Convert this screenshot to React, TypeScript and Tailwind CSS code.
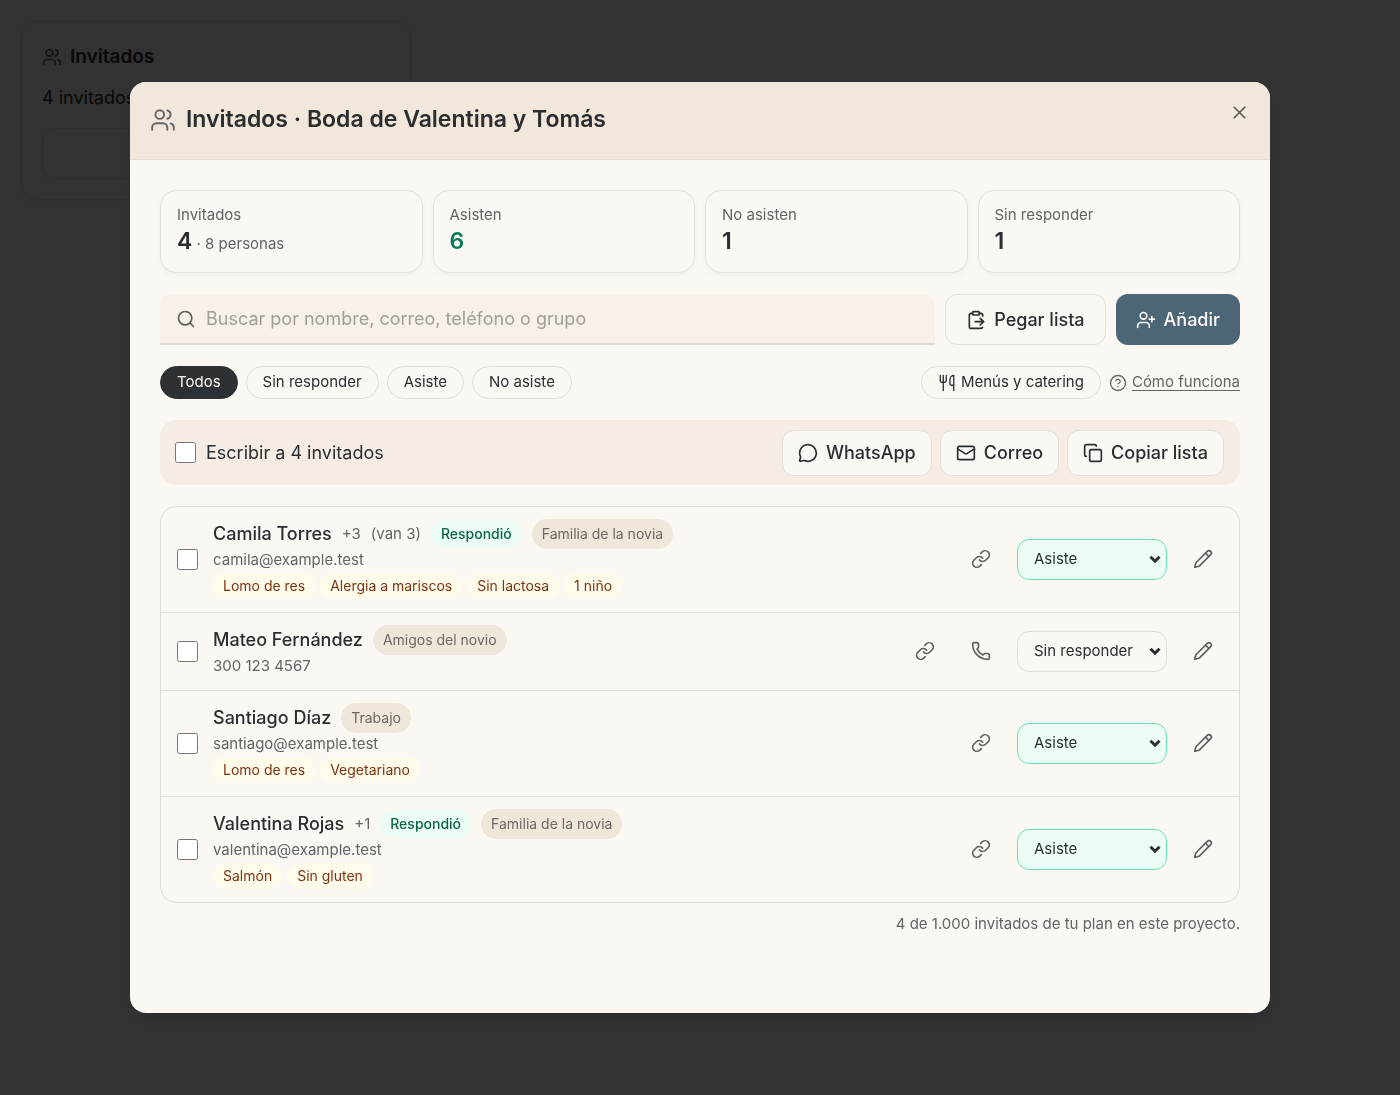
import { useState } from "react";
import {
  ChevronDown,
  CircleHelp,
  ClipboardPaste,
  Copy,
  Link,
  Mail,
  MessageCircle,
  Pencil,
  Phone,
  Search,
  UserPlus,
  Users,
  Utensils,
  X,
} from "lucide-react";

type Guest = {
  id: string;
  name: string;
  extra?: string;
  arriving?: string;
  responded?: boolean;
  group: string;
  contact: string;
  phone?: boolean;
  tags: string[];
  status: string;
};

const guests: Guest[] = [
  {
    id: "camila",
    name: "Camila Torres",
    extra: "+3",
    arriving: "(van 3)",
    responded: true,
    group: "Familia de la novia",
    contact: "camila@example.test",
    tags: ["Lomo de res", "Alergia a mariscos", "Sin lactosa", "1 niño"],
    status: "Asiste",
  },
  {
    id: "mateo",
    name: "Mateo Fernández",
    group: "Amigos del novio",
    contact: "300 123 4567",
    phone: true,
    tags: [],
    status: "Sin responder",
  },
  {
    id: "santiago",
    name: "Santiago Díaz",
    group: "Trabajo",
    contact: "santiago@example.test",
    tags: ["Lomo de res", "Vegetariano"],
    status: "Asiste",
  },
  {
    id: "valentina",
    name: "Valentina Rojas",
    extra: "+1",
    responded: true,
    group: "Familia de la novia",
    contact: "valentina@example.test",
    tags: ["Salmón", "Sin gluten"],
    status: "Asiste",
  },
];

const filters = ["Todos", "Sin responder", "Asiste", "No asiste"];

function Stat({ label, value, note, green }: { label: string; value: string; note?: string; green?: boolean }) {
  return (
    <div className="h-[83px] rounded-2xl border border-[#e3dfda] px-4 pt-3 shadow-[0_2px_6px_rgba(0,0,0,0.04)]">
      <p className="text-[15px] leading-[23px] text-[#646464]">{label}</p>
      <p className="leading-[30px]">
        <span className={green ? "text-[23px] font-semibold text-[#0a7a56]" : "text-[23px] font-semibold text-[#2b2d2e]"}>
          {value}
        </span>
        {note && <span className="text-[15px] text-[#646464]"> {note}</span>}
      </p>
    </div>
  );
}

function IconButton({ label, children }: { label: string; children: React.ReactNode }) {
  return (
    <button type="button" aria-label={label} className="flex size-[46px] items-center justify-center text-[#5f5f5f]">
      {children}
    </button>
  );
}

function GuestRow({ guest }: { guest: Guest }) {
  const [status, setStatus] = useState(guest.status);
  return (
    <li className="flex items-center border-b border-[#e0dcd7] pt-3 pr-[13px] pb-[13px] pl-4 last:border-b-0">
      <input type="checkbox" aria-label={`Seleccionar a ${guest.name}`} className="size-[21px] shrink-0" />
      <div className="ml-[15px] min-w-0 flex-1">
        <div className="flex h-[30px] items-center gap-[10px]">
          <span className="text-lg font-medium text-[#2b2d2e]">{guest.name}</span>
          {guest.extra && <span className="text-[15px] text-[#646464]">{guest.extra}</span>}
          {guest.arriving && <span className="text-[15px] text-[#646464]">{guest.arriving}</span>}
          {guest.responded && (
            <span className="rounded-full bg-[#ecfdf5] px-[10px] py-1 text-sm font-medium text-[#0b6647]">Respondió</span>
          )}
          <span className="rounded-full bg-[#f0e7db] px-[10px] py-[5px] text-sm text-[#6b6762]">{guest.group}</span>
        </div>
        <p className="text-[15px] leading-[22px] text-[#646464]">{guest.contact}</p>
        {guest.tags.length > 0 && (
          <div className="mt-[2px] flex gap-[5px]">
            {guest.tags.map((tag) => (
              <span key={tag} className="rounded-full bg-[#fffbeb] px-[10px] py-[3px] text-sm text-[#7c3413]">
                {tag}
              </span>
            ))}
          </div>
        )}
      </div>
      <div className="flex items-center gap-[13px]">
        <div className="flex gap-[10px]">
          <IconButton label="Copiar enlace">
            <Link size={20} />
          </IconButton>
          {guest.phone && (
            <IconButton label="Llamar">
              <Phone size={20} />
            </IconButton>
          )}
        </div>
        <div className="relative w-[150px]">
          <select
            aria-label={`Respuesta de ${guest.name}`}
            value={status}
            onChange={(e) => setStatus(e.target.value)}
            className={
              status === "Asiste"
                ? "h-[41px] w-full appearance-none rounded-xl border border-[#6ee0b4] bg-[#ecfdf5] pl-4 text-[15px] text-[#2b2d2e]"
                : "h-[41px] w-full appearance-none rounded-xl border border-[#e0dcd7] bg-[#fbf7f3] pl-4 text-[15px] text-[#2b2d2e]"
            }
          >
            <option>Sin responder</option>
            <option>Asiste</option>
            <option>No asiste</option>
          </select>
          <ChevronDown
            size={18}
            strokeWidth={4}
            strokeLinecap="butt"
            strokeLinejoin="miter"
            className="pointer-events-none absolute inset-y-0 right-[3px] my-auto"
          />
        </div>
        <IconButton label={`Editar a ${guest.name}`}>
          <Pencil size={20} />
        </IconButton>
      </div>
    </li>
  );
}

export default function App() {
  const [filter, setFilter] = useState("Todos");
  return (
    <div className="min-h-screen bg-[#fafafa] p-[21px] font-['Inter',sans-serif] text-[#2b2d2e]">
      <section className="w-[390px] rounded-2xl border border-[#e3dfda] p-5 shadow-[0_2px_6px_rgba(0,0,0,0.04)]">
        <h2 className="flex items-center gap-2 text-[19px] leading-[30px] font-semibold">
          <Users size={20} className="text-[#646464]" />
          Invitados
        </h2>
        <p className="mt-3 text-lg leading-7">4 invitados en la lista</p>
        <button
          type="button"
          aria-label="Abrir invitados"
          className="mt-4 block h-[51px] w-full rounded-xl border border-[#e3dfda]"
        />
      </section>

      <div className="fixed inset-0 flex items-center justify-center bg-black/80">
        <div
          role="dialog"
          aria-labelledby="dialog-title"
          className="flex h-[85vh] w-full max-w-[1140px] flex-col overflow-hidden rounded-2xl bg-[#fbf7f3] shadow-lg"
        >
          <header className="flex h-[78px] shrink-0 items-start border-b border-[#e8ddcf] bg-[#f1e7da] px-5 pt-5">
            <Users size={26} strokeWidth={1.75} className="mt-[5px] text-[#646464]" />
            <h1 id="dialog-title" className="ml-[10px] text-[23px] leading-[34px] font-semibold">
              Invitados · Boda de Valentina y Tomás
            </h1>
            <button type="button" aria-label="Cerrar" className="ml-auto text-[#5f5b56]">
              <X size={21} />
            </button>
          </header>

          <main className="flex flex-1 flex-col gap-[21px] overflow-hidden px-[30px] pt-[30px]">
            <div className="grid grid-cols-4 gap-[10px]">
              <Stat label="Invitados" value="4" note="· 8 personas" />
              <Stat label="Asisten" value="6" green />
              <Stat label="No asisten" value="1" />
              <Stat label="Sin responder" value="1" />
            </div>

            <div className="flex h-[51px] gap-[10px] text-lg font-medium">
              <label className="flex flex-1 items-center gap-[10px] rounded-t-xl border-b-2 border-[#deddd5] bg-[#f7f1ea] px-4">
                <Search size={20} className="text-[#5f5f5f]" />
                <input
                  type="search"
                  aria-label="Buscar invitados"
                  placeholder="Buscar por nombre, correo, teléfono o grupo"
                  className="min-w-0 flex-1 bg-transparent font-normal outline-none placeholder:text-[#a09e9a]"
                />
              </label>
              <button type="button" className="flex items-center gap-2 rounded-xl border border-[#e3dfda] px-5">
                <ClipboardPaste size={20} />
                Pegar lista
              </button>
              <button type="button" className="flex items-center gap-2 rounded-xl bg-[#4c6577] px-5 text-[#fbf7f3]">
                <UserPlus size={20} />
                Añadir
              </button>
            </div>

            <div className="flex h-[33px] items-stretch gap-2 text-[15px]">
              {filters.map((name) => (
                <button
                  key={name}
                  type="button"
                  aria-pressed={filter === name}
                  onClick={() => setFilter(name)}
                  className={
                    filter === name
                      ? "rounded-full border border-[#2e3133] bg-[#2e3133] px-4 text-[#fbf7f3]"
                      : "rounded-full border border-[#e0dcd7] px-4"
                  }
                >
                  {name}
                </button>
              ))}
              <button type="button" className="ml-auto flex items-center gap-[5px] rounded-full border border-[#e0dcd7] px-4">
                <Utensils size={18} strokeWidth={1.75} />
                Menús y catering
              </button>
              <a href="#como-funciona" className="flex items-center gap-[5px] text-[#646464]">
                <CircleHelp size={18} strokeWidth={1.75} />
                <span className="underline underline-offset-3">Cómo funciona</span>
              </a>
            </div>

            <div className="flex h-[65px] shrink-0 items-center rounded-2xl bg-[#f4ece5] pr-4 pl-[15px] text-lg">
              <label className="flex items-center gap-[10px]">
                <input type="checkbox" className="size-[21px]" />
                Escribir a 4 invitados
              </label>
              <div className="ml-auto flex h-[46px] items-stretch gap-2 font-medium">
                <button type="button" className="flex items-center gap-2 rounded-xl border border-[#e3dfda] bg-[#fbf7f3] px-[15px]">
                  <MessageCircle size={20} />
                  WhatsApp
                </button>
                <button type="button" className="flex items-center gap-2 rounded-xl border border-[#e3dfda] bg-[#fbf7f3] px-[15px]">
                  <Mail size={20} />
                  Correo
                </button>
                <button type="button" className="flex items-center gap-2 rounded-xl border border-[#e3dfda] bg-[#fbf7f3] px-[15px]">
                  <Copy size={20} />
                  Copiar lista
                </button>
              </div>
            </div>

            <div>
              <ul className="rounded-2xl border border-[#e0dcd7]">
                {guests.map((guest) => (
                  <GuestRow key={guest.id} guest={guest} />
                ))}
              </ul>
              <p className="mt-[10px] text-right text-[15px] leading-[22px] text-[#646464]">
                4 de 1.000 invitados de tu plan en este proyecto.
              </p>
            </div>
          </main>
        </div>
      </div>
    </div>
  );
}
